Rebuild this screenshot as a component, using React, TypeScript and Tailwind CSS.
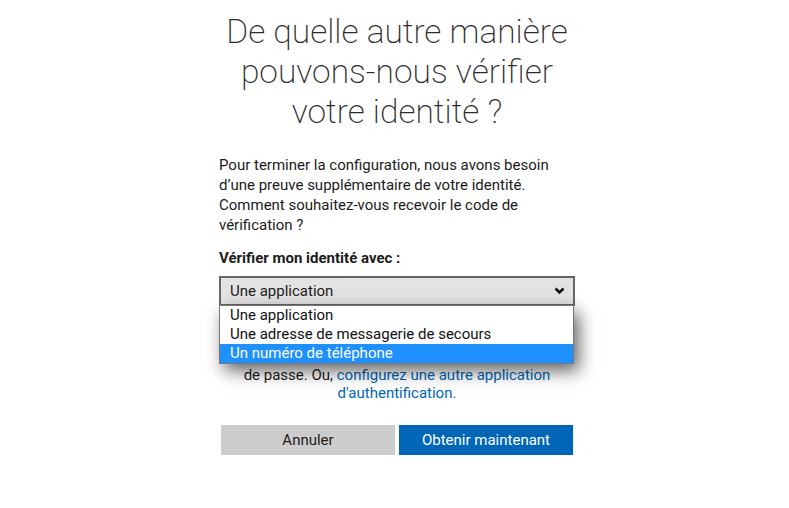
export default function App() {
  const options = ["Une application", "Une adresse de messagerie de secours", "Un numéro de téléphone"];
  return (
    <div className="min-h-[508px] w-full bg-white font-['Roboto',sans-serif] text-[#1b1b1b]">
      <div className="flex justify-center pl-[5px]">
        <div className="flex w-[356px] flex-col">
          <h1 className="-mx-10 pt-[12px] text-center text-[33.5px] font-extralight leading-[40px] text-[#2b2b2b]">
            De quelle autre manière
            <br />
            pouvons-nous vérifier
            <br />
            votre identité ?
          </h1>
          <p className="mt-[23px] text-[15px] leading-[20px]">
            Pour terminer la configuration, nous avons besoin d’une preuve supplémentaire de votre identité. Comment souhaitez-vous recevoir le code de vérification ?
          </p>
          <label className="mt-[13px] text-[15px] font-bold leading-[20px]">Vérifier mon identité avec :</label>
          <div className="relative mt-[8px]">
            <div className="flex h-[30px] items-center justify-between border-2 border-[#666666] bg-[#e3e3e3] pl-[9px] pr-[8px] text-[15px]">
              <span>Une application</span>
              <svg width="11" height="8" viewBox="0 0 11 8" fill="none">
                <path d="M1.5 1.5 5.5 5.5 9.5 1.5" stroke="#111" strokeWidth="2.6" />
              </svg>
            </div>
            <ul className="absolute left-0 right-[1px] top-[29px] z-10 border border-[#767676] bg-white text-[15px] leading-[19px] shadow-[5px_7px_16px_rgba(0,0,0,0.6)]">
              {options.map((o, i) => (
                <li key={o} className={i === 2 ? "bg-[#1e90ff] pl-[10px] text-white" : "pl-[10px] text-[#111]"}>
                  {o}
                </li>
              ))}
            </ul>
          </div>
          <p className="mt-[60px] text-center text-[15px] leading-[18px]">
            de passe. Ou, <a className="text-[#0067b8]">configurez une autre application</a>
            <br />
            <a className="text-[#0067b8]">d'authentification.</a>
          </p>
          <div className="mt-[23px] flex gap-[4px] px-[2px]">
            <button className="h-[30px] w-[174px] bg-[#cccccc] text-[15px] text-[#1b1b1b]">Annuler</button>
            <button className="h-[30px] w-[174px] bg-[#0067b8] text-[15px] text-white">Obtenir maintenant</button>
          </div>
        </div>
      </div>
    </div>
  );
}
